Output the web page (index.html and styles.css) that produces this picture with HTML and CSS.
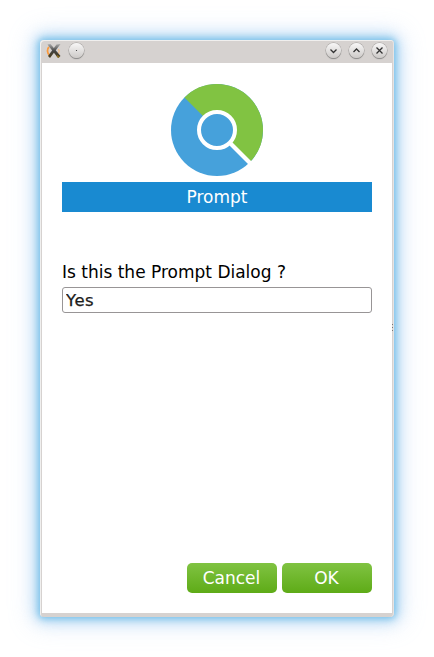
FILE: index.html
```html
<!DOCTYPE html>
<html lang="en">
<head>
<meta charset="utf-8">
<title>Prompt</title>
<link rel="stylesheet" href="styles.css">
</head>
<body>
<div class="window">
  <header class="titlebar">
    <svg class="app-icon" width="16" height="16" viewBox="0 0 16 16">
      <defs>
        <linearGradient id="blade" x1="0" y1="0" x2="0" y2="1"><stop offset="0" stop-color="#aaa"/><stop offset=".5" stop-color="#444"/><stop offset="1" stop-color="#493b18"/></linearGradient>
      </defs>
      <path d="M3 4C.800 6 1 10 3.500 12" fill="none" stroke="#fb9a3c" stroke-width="1.800"/>
      <path d="M12.500 6C13.500 7.500 13.500 9 12.500 10.500" fill="none" stroke="#f9bd83" stroke-width="1.200"/>
      <path d="M1.500 1.500L4.500 1L14.500 13L12 15Z" fill="url(#blade)"/>
      <path d="M14.500 1L10.500 1.500L2 13L4 15Z" fill="url(#blade)"/>
      <path d="M11 12.500L13 14.500" stroke="#94731f" stroke-width="1.400"/>
    </svg>
    <span class="knob"><svg width="15" height="15" viewBox="0 0 15 15"><circle cx="7.500" cy="7.500" r=".6" fill="#333"/></svg></span>
    <span class="spacer"></span>
    <span class="knob"><svg width="15" height="15" viewBox="0 0 15 15"><path d="M4.500 6.500L7.500 9.500L10.500 6.500"/></svg></span>
    <span class="knob"><svg width="15" height="15" viewBox="0 0 15 15"><path d="M4.500 9L7.500 6L10.500 9"/></svg></span>
    <span class="knob"><svg width="15" height="15" viewBox="0 0 15 15"><path d="M4.500 4.500L10.500 10.500M10.500 4.500L4.500 10.500"/></svg></span>
  </header>
  <main class="content">
    <svg class="logo" width="92" height="92" viewBox="0 0 92 92">
      <circle cx="46" cy="46" r="46" fill="#46a1db"/>
      <path d="M46 46L13.473 13.473A46 46 0 0 1 46 0A46 46 0 0 1 92 46A46 46 0 0 1 78.527 78.527Z" fill="#81c342"/>
      <path d="M58 58L80 80" stroke="#fff" stroke-width="4.200"/>
      <circle cx="46" cy="46" r="18" fill="#46a1db" stroke="#fff" stroke-width="4"/>
    </svg>
    <h1 class="banner">Prompt</h1>
    <label class="question" for="answer">Is this the Prompt Dialog ?</label>
    <input class="answer" id="answer" type="text" value="Yes">
    <div class="actions">
      <button class="button" type="button">Cancel</button>
      <button class="button" type="button">OK</button>
    </div>
  </main>
  <div class="grip"><i></i><i></i><i></i></div>
</div>
</body>
</html>
```
FILE: styles.css
```css
* { box-sizing: border-box; }

body {
  margin: 0;
  padding: 40px;
  background: #fff;
  font-family: "DejaVu Sans", sans-serif;
  font-size: 17px;
  overflow: hidden;
}

.window {
  position: relative;
  display: flex;
  flex-direction: column;
  width: 354px;
  height: 577px;
  padding: 1px 2px 4px;
  background: #d6d2d0;
  border-radius: 4px;
  box-shadow:
    inset 1px 1px 0 #f0efee,
    inset -1px 0 0 #e6e3e2,
    0 0 6px 2px rgba(83, 178, 227, .6),
    0 0 14px 4px rgba(100, 180, 232, .45),
    0 0 24px 8px rgba(150, 190, 240, .28);
}

.titlebar {
  display: flex;
  align-items: center;
  height: 22px;
  padding: 0 5px 3px 4px;
}

.app-icon { margin-right: 7px; }
.spacer { flex: 1; }

.knob {
  width: 15px;
  height: 15px;
  border-radius: 50%;
  background: linear-gradient(#f8f7f7, #cdcac8);
  box-shadow: 0 0 0 .5px #a19e9c, 0 1px 1px #777;
}

.knob + .knob { margin-left: 8px; }
.knob svg { display: block; }
.knob path { fill: none; stroke: #333; stroke-width: 1.3; }

.content {
  display: flex;
  flex-direction: column;
  height: 550px;
  padding: 21px 20px 20px;
  background: #fff;
}

.logo { align-self: center; flex: none; }

.banner {
  height: 30px;
  margin: 6px 0 50px;
  background: #198ad1;
  color: #fff;
  font-size: 17px;
  font-weight: normal;
  line-height: 30px;
  text-align: center;
}

.question {
  height: 20px;
  margin-bottom: 5px;
  color: #000;
  line-height: 20px;
}

.answer {
  width: 310px;
  height: 26px;
  padding: 0 3px;
  border: 1px solid #989596;
  border-radius: 3px;
  background: #fff;
  color: #1d1b1a;
  font: 16.5px "DejaVu Sans", sans-serif;
  letter-spacing: .5px;
  -webkit-text-stroke: .25px #1d1b1a;
  outline: none;
}

.actions {
  display: flex;
  justify-content: flex-end;
  gap: 5px;
  margin-top: auto;
}

.button {
  width: 90px;
  height: 30px;
  padding: 0 1px 0 0;
  border: 0;
  border-radius: 5px;
  background: linear-gradient(#80c342, #5eab17);
  color: #fff;
  font: 17px "DejaVu Sans", sans-serif;
}

.grip {
  position: absolute;
  right: 1px;
  top: 284px;
  display: grid;
  gap: 2px;
}

.grip i {
  width: 1px;
  height: 1px;
  background: #777;
}
```
